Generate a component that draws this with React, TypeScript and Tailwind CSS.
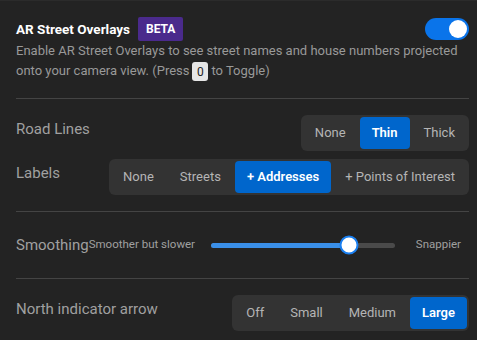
import { useState } from "react"

const Segmented = ({ options, value, onChange }: { options: string[]; value: string; onChange: (v: string) => void }) => {
  return (
    <div className="flex gap-0.5 rounded-md bg-[#333333] p-0.5">
      {options.map((o) => (
        <div
          key={o}
          onClick={() => onChange(o)}
          className={
            o == value
              ? "h-8 px-3 flex items-center rounded-[4px] bg-[#0066cc] text-white font-semibold text-[13px] whitespace-nowrap cursor-pointer"
              : "h-8 px-3 flex items-center rounded-[4px] text-[#b5b5b5] text-[13px] whitespace-nowrap cursor-pointer"
          }
        >
          {o}
        </div>
      ))}
    </div>
  )
}

export default function App() {
  const [enabled, setEnabled] = useState(true)
  const [roadLines, setRoadLines] = useState("Thin")
  const [labels, setLabels] = useState("+ Addresses")
  const [arrow, setArrow] = useState("Large")
  const [smoothing, setSmoothing] = useState(75)

  return (
    <div className="w-[477px] h-[340px] overflow-hidden bg-[#232323] border-t border-[#2b2b2b] pl-4 pr-2 font-['Roboto',sans-serif]">
      <div className="pt-4 pb-4 border-b border-[#444444]">
        <div className="flex items-center justify-between h-6">
          <div className="flex items-center gap-2">
            <span className="text-white font-bold text-[13.5px]">AR Street Overlays</span>
            <span className="bg-[#4a2a8c] text-white font-bold text-[12px] h-6 px-2 flex items-center rounded-[2px]">BETA</span>
          </div>
          <div
            onClick={() => setEnabled(!enabled)}
            className={
              enabled
                ? "w-11 h-[22px] rounded-full bg-[#0a74ea] p-0.5 flex justify-end cursor-pointer"
                : "w-11 h-[22px] rounded-full bg-[#555555] p-0.5 flex justify-start cursor-pointer"
            }
          >
            <div className="w-[18px] h-[18px] rounded-full bg-white"></div>
          </div>
        </div>
        <p className="text-[#999999] text-[13px] leading-5 pb-px">
          Enable AR Street Overlays to see street names and house numbers projected onto your camera view. (Press
          <span className="inline-flex items-center justify-center mx-[3px] w-4 h-[19px] rounded-[3px] bg-[#e6e6e6] text-[#222222] text-[12px] align-middle">
            0
          </span>
          to Toggle)
        </p>
      </div>

      <div className="py-4 border-b border-[#444444] flex flex-col gap-2">
        <div className="flex items-start justify-between">
          <span className="pt-[3px] text-[#a0a0a0] text-[15px]">Road Lines</span>
          <Segmented options={["None", "Thin", "Thick"]} value={roadLines} onChange={setRoadLines} />
        </div>
        <div className="flex items-start justify-between">
          <span className="pt-[3px] text-[#a0a0a0] text-[15px]">Labels</span>
          <Segmented
            options={["None", "Streets", "+ Addresses", "+ Points of Interest"]}
            value={labels}
            onChange={setLabels}
          />
        </div>
      </div>

      <div className="py-4 border-b border-[#444444] h-[67px] flex items-center whitespace-nowrap">
        <span className="text-[#a0a0a0] text-[15px]">Smoothing</span>
        <span className="text-[#a0a0a0] text-[11.5px]">Smoother but slower</span>
        <div className="relative ml-4 w-[184px] shrink-0 h-[5px] rounded-full bg-[#4a4a4a]">
          <div className="h-full rounded-full bg-[#3a8fe8]" style={{ width: `${smoothing}%` }}></div>
          <div
            onClick={() => setSmoothing(smoothing)}
            className="absolute top-1/2 -translate-y-1/2 -translate-x-1/2 w-[19px] h-[19px] rounded-full bg-white border-2 border-[#1a7ff0]"
            style={{ left: `${smoothing}%` }}
          ></div>
        </div>
        <span className="ml-auto mr-2 text-[#a0a0a0] text-[11.5px]">Snappier</span>
      </div>

      <div className="py-4 flex items-start justify-between">
        <span className="pt-[3px] text-[#a0a0a0] text-[15px]">North indicator arrow</span>
        <Segmented options={["Off", "Small", "Medium", "Large"]} value={arrow} onChange={setArrow} />
      </div>
    </div>
  )
}
